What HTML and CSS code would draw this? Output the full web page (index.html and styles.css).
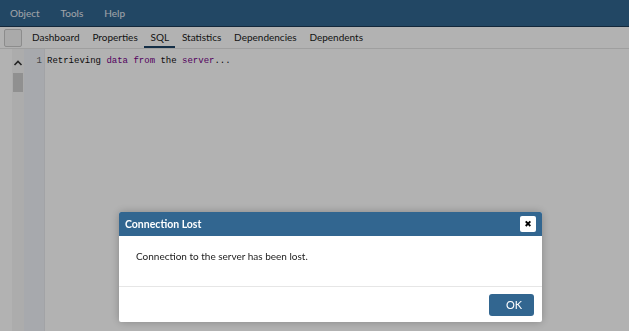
FILE: index.html
```html
<!DOCTYPE html>
<html lang="en">
<head>
  <meta charset="UTF-8">
  <title>pgAdmin</title>
  <link rel="stylesheet" href="styles.css">
</head>
<body>
  <header class="navbar">
    <a href="#">Object</a>
    <a href="#">Tools</a>
    <a href="#">Help</a>
  </header>

  <nav class="tabbar">
    <span class="tab-box"></span>
    <a class="tab" href="#">Dashboard</a>
    <a class="tab" href="#">Properties</a>
    <a class="tab active" href="#">SQL</a>
    <a class="tab" href="#">Statistics</a>
    <a class="tab" href="#">Dependencies</a>
    <a class="tab" href="#">Dependents</a>
  </nav>

  <div class="editor">
    <div class="margin"></div>
    <div class="scroll">
      <svg class="caret" width="10" height="8" viewBox="0 0 10 8">
        <path d="M1.5 6 L5 2.5 L8.5 6" fill="none" stroke="#333" stroke-width="1.6"/>
      </svg>
      <span class="thumb"></span>
    </div>
    <div class="gutter">1</div>
    <pre class="code">Retrieving <span class="kw">data</span> <span class="kw">from</span> the <span class="kw">server</span>...</pre>
  </div>

  <!-- Modal -->
  <div class="backdrop"></div>
  <div class="modal">
    <div class="modal-head">
      <span>Connection Lost</span>
      <button class="modal-close">&#10006;</button>
    </div>
    <div class="modal-body">Connection to the server has been lost.</div>
    <div class="modal-foot">
      <button class="btn">OK</button>
    </div>
  </div>
</body>
</html>
```

FILE: styles.css
```css
* { margin: 0; padding: 0; box-sizing: border-box; }
html, body { height: 100%; }
body {
  font-family: 'Lato', sans-serif;
  background: #fff;
  overflow: hidden;
  display: flex;
  flex-direction: column;
}
/* Top menu */
.navbar {
  height: 27px;
  background: #326690;
  display: flex;
  align-items: center;
  padding-left: 10px;
  gap: 21px;
  border-bottom: 1px solid #1c3a55;
}
.navbar a {
  color: #e6ebf0;
  text-decoration: none;
  font-size: 10px;
}
/* Tabs */
.tabbar {
  height: 22px;
  display: flex;
  align-items: stretch;
  border-bottom: 1px solid #e4e4e4;
  padding-left: 4px;
}
.tab-box {
  width: 18px;
  height: 18px;
  margin-top: 2px;
  border: 1px solid #c9c9c9;
  border-radius: 2px;
  background: #f4f4f4;
  margin-right: 3.6px;
}
.tab {
  font-size: 10px;
  color: #1a1a1a;
  text-decoration: none;
  padding: 0 6.4px;
  line-height: 20px;
  border-bottom: 2px solid transparent;
}
.tab.active {
  border-bottom-color: #1f4466;
}
/* Editor */
.editor {
  flex: 1;
  display: flex;
}
.margin { width: 12px; }
.scroll {
  width: 12px;
  background: #f6f6f6;
  position: relative;
}
.caret {
  position: absolute;
  top: 10px;
  left: 1px;
}
.thumb {
  position: absolute;
  top: 24px;
  left: 1px;
  width: 10px;
  height: 19px;
  background: #cfcfcf;
}
.gutter {
  width: 21px;
  background: #f0f3f8;
  border-right: 1px solid #e8eaee;
  font-family: 'Liberation Mono', monospace;
  font-size: 9px;
  color: #666;
  text-align: right;
  padding: 7px 2px 0 0;
}
.code {
  font-family: 'Liberation Mono', monospace;
  font-size: 9px;
  color: #111;
  padding: 7px 0 0 2px;
}
.kw { color: #770088; }
/* Modal */
.backdrop {
  position: fixed;
  inset: 0;
  background: rgba(0,0,0,0.3);
}
.modal {
  position: fixed;
  left: 119px;
  top: 212px;
  width: 423px;
  height: 110px;
  background: #fff;
  border-radius: 2px;
  box-shadow: 0 0 8px rgba(0,0,0,0.25);
  display: flex;
  flex-direction: column;
  overflow: hidden;
}
.modal-head {
  height: 24px;
  background: #326690;
  color: #fff;
  font-weight: bold;
  font-size: 10.5px;
  display: flex;
  align-items: center;
  justify-content: space-between;
  padding: 0 6px 0 6px;
}
.modal-close {
  width: 16px;
  height: 16px;
  border: none;
  border-radius: 2px;
  background: #fff;
  color: #000;
  font-size: 9px;
  line-height: 16px;
  font-family: 'DejaVu Sans', sans-serif;
  cursor: pointer;
}
.modal-body {
  height: 51px;
  padding: 14px 17px 0;
  font-size: 10px;
  color: #222;
  border-bottom: 1px solid #e6e6e6;
}
.modal-foot {
  flex: 1;
  display: flex;
  justify-content: flex-end;
  align-items: center;
  padding-right: 8px;
}
.btn {
  width: 45px;
  height: 22px;
  border: none;
  border-radius: 3px;
  background: #326690;
  color: #fff;
  font-family: 'Lato', sans-serif;
  font-size: 11px;
  text-align: right;
  padding-right: 12px;
}
```
